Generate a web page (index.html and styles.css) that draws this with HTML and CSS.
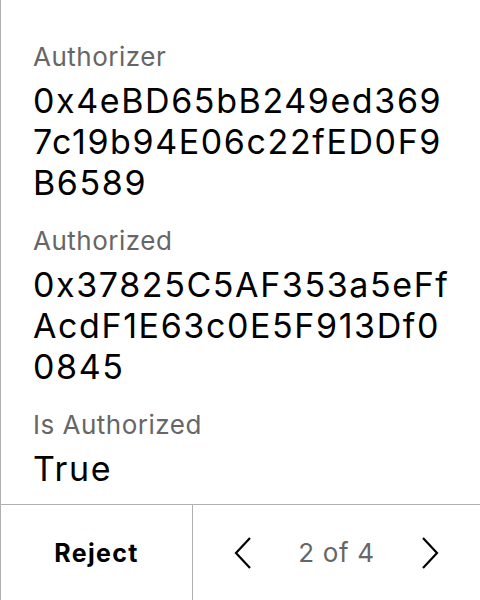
FILE: index.html
```html
<!DOCTYPE html>
<html>
<head>
<meta charset="utf-8">
<link rel="stylesheet" href="styles.css">
</head>
<body>
<div class="panel">
  <div class="content">
    <div class="field">
      <div class="label">Authorizer</div>
      <div class="value">0x4eBD65bB249ed3697c19b94E06c22fED0F9B6589</div>
    </div>
    <div class="field">
      <div class="label">Authorized</div>
      <div class="value">0x37825C5AF353a5eFfAcdF1E63c0E5F913Df00845</div>
    </div>
    <div class="field">
      <div class="label">Is Authorized</div>
      <div class="value">True</div>
    </div>
  </div>
  <div class="footer">
    <div class="reject">Reject</div>
    <div class="pager">
      <svg class="chev" width="18" height="32" viewBox="0 0 18 32"><path d="M16 1 L2 16 L16 31" fill="none" stroke="#000" stroke-width="2.2"/></svg>
      <span class="count">2 of 4</span>
      <svg class="chev" width="18" height="32" viewBox="0 0 18 32"><path d="M2 1 L16 16 L2 31" fill="none" stroke="#000" stroke-width="2.2"/></svg>
    </div>
  </div>
</div>
</body>
</html>
```
FILE: styles.css
```css
html, body {
  margin: 0;
  padding: 0;
  background: #fff;
}
body {
  font-family: Inter, "Noto Sans", sans-serif;
  color: #000;
}
.panel {
  width: 480px;
  height: 600px;
  border-left: 1px solid #b0b0b0;
  box-sizing: border-box;
  display: flex;
  flex-direction: column;
}
.content {
  flex: 1;
  padding: 41px 30px 0 32px;
  display: flex;
  flex-direction: column;
  gap: 22px;
}
.label {
  font-size: 26px;
  line-height: 32px;
  letter-spacing: 0.5px;
  color: #666;
}
.value {
  font-size: 34px;
  line-height: 41px;
  letter-spacing: 1.6px;
  margin-top: 7px;
  word-break: break-all;
}
.footer {
  height: 96px;
  border-top: 1px solid #b0b0b0;
  box-sizing: border-box;
  display: flex;
}
.reject {
  width: 191px;
  border-right: 1px solid #b0b0b0;
  display: flex;
  align-items: center;
  justify-content: center;
  font-size: 25px;
  font-weight: 700;
  letter-spacing: 1.3px;
}
.pager {
  flex: 1;
  display: flex;
  align-items: center;
  justify-content: center;
  gap: 46px;
}
.count {
  font-size: 26px;
  letter-spacing: 0.7px;
  color: #666;
}
```
